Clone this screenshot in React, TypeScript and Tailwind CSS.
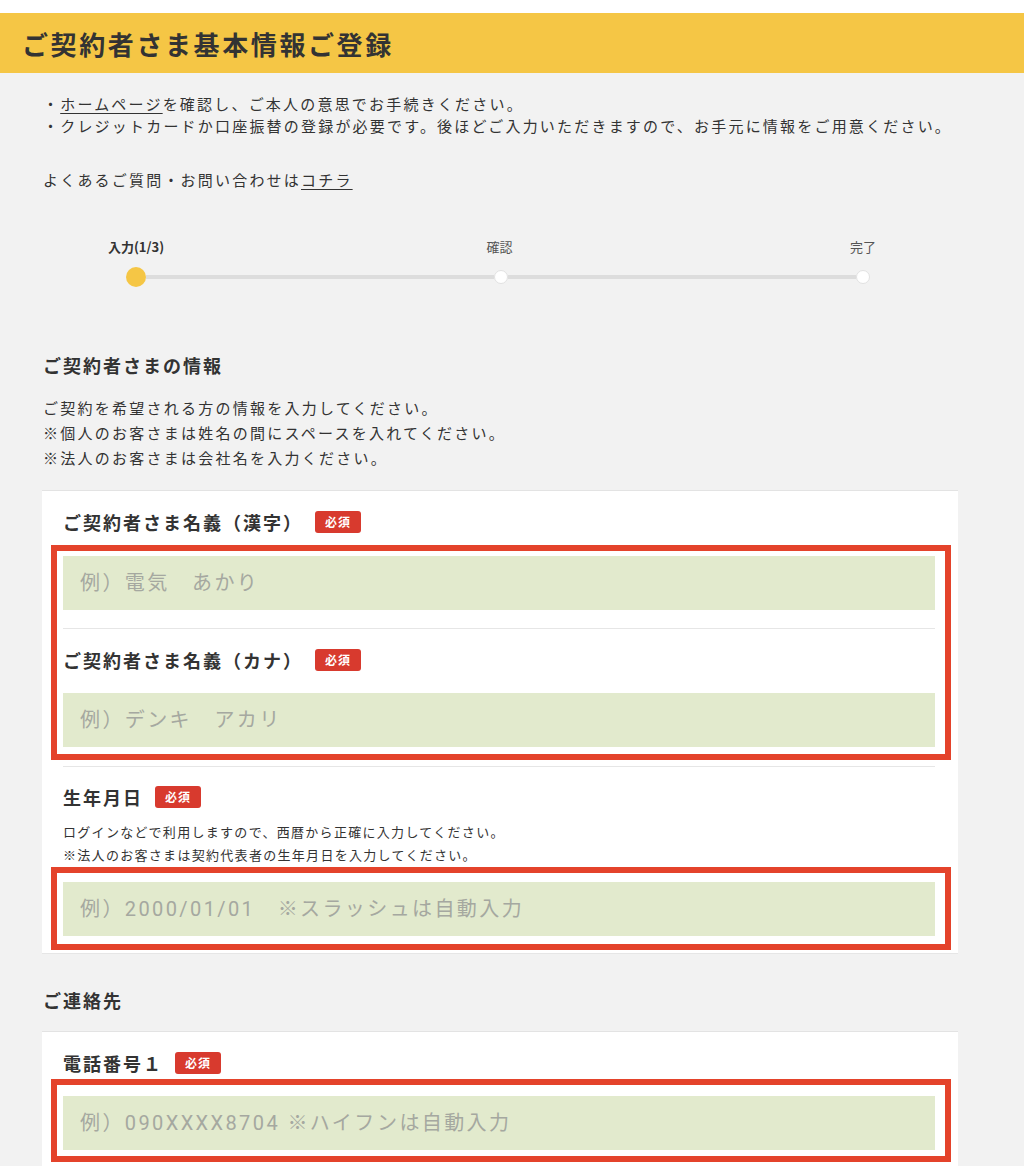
import type { ReactNode } from 'react';

function Badge() {
    return (
        <span className="ml-[12px] inline-flex h-[22px] w-[46px] items-center justify-center rounded-[3px] bg-[#d83a2e] text-[12px] font-bold tracking-[1px] text-white">
            必須
        </span>
    );
}

function Label({ children }: { children: ReactNode }) {
    return (
        <div className="flex items-center">
            <span className="text-[18px] font-bold leading-[24px] tracking-[2px] text-[#333]">{children}</span>
            <Badge />
        </div>
    );
}

function Field({ placeholder }: { placeholder: string }) {
    return (
        <input
            readOnly
            placeholder={placeholder}
            className="block h-[54px] w-full bg-[#e2eacd] pl-[17px] font-['Roboto','Noto_Sans_CJK_JP',sans-serif] text-[20px] tracking-[2.4px] text-[#333] outline-none placeholder:text-[#a5a8a0]"
        />
    );
}

// red annotation frame around the fields
function Mark({ className, children }: { className: string; children: ReactNode }) {
    return (
        <div className={`-ml-[12px] -mr-[16px] border-[6px] border-[#e4432b] pl-[6px] pr-[10px] ${className}`}>
            {children}
        </div>
    );
}

export default function App() {
    return (
        <div className="min-h-[1166px] bg-[#f2f2f2] font-['Noto_Sans_CJK_JP',sans-serif] text-[#333]">
            <div className="h-[13px] bg-white" />
            <header className="flex h-[60px] items-center bg-[#f5c645] px-[22px]">
                <h1 className="text-[26px] font-bold tracking-[2.6px] text-[#333]">ご契約者さま基本情報ご登録</h1>
            </header>

            <main className="px-[43px] pt-[20px]">
                <div className="text-[15px] leading-[22px] tracking-[2.2px]">
                    <p>
                        ・<span className="underline underline-offset-[3px]">ホームページ</span>を確認し、ご本人の意思でお手続きください。
                    </p>
                    <p>・クレジットカードか口座振替の登録が必要です。後ほどご入力いただきますので、お手元に情報をご用意ください。</p>
                    <p className="mt-[32px]">
                        よくあるご質問・お問い合わせは<span className="underline underline-offset-[3px]">コチラ</span>
                    </p>
                </div>

                {/* stepper */}
                <div className="mt-[47px] ml-[53px] flex w-[807px] justify-between text-[13px] leading-[18px]">
                    <span className="w-[80px] text-center font-bold">入力(1/3)</span>
                    <span className="w-[80px] text-center text-[#555]">確認</span>
                    <span className="w-[80px] text-center text-[#555]">完了</span>
                </div>
                <div className="mt-[11px] ml-[83px] flex h-[20px] w-[744px] items-center">
                    <span className="h-[20px] w-[20px] shrink-0 rounded-full bg-[#f5c645]" />
                    <span className="h-[4px] flex-1 bg-[#dddddd]" />
                    <span className="h-[14px] w-[14px] shrink-0 rounded-full border border-[#e2e2e2] bg-white" />
                    <span className="h-[4px] flex-1 bg-[#dddddd]" />
                    <span className="h-[14px] w-[14px] shrink-0 rounded-full border border-[#e2e2e2] bg-white" />
                </div>

                <h2 className="mt-[65px] text-[18px] font-bold leading-[26px] tracking-[2px]">ご契約者さまの情報</h2>
                <div className="mt-[17px] text-[15px] leading-[25px] tracking-[2.25px]">
                    <p>ご契約を希望される方の情報を入力してください。</p>
                    <p>※個人のお客さまは姓名の間にスペースを入れてください。</p>
                    <p>※法人のお客さまは会社名を入力ください。</p>
                </div>

                <section className="mt-[20px] -ml-px w-[916px] border-t border-[#e3e3e3] bg-white pr-[23px] pb-[3px] pl-[21px] pt-[19px] shadow-[0_1px_0_#e6e6e6]">
                    <Label>ご契約者さま名義（漢字）</Label>
                    <Mark className="mt-[11px] pt-[5px] pb-[7px]">
                        <Field placeholder="例）電気　あかり" />
                        <div className="mt-[18px] h-px bg-[#e6e6e6]" />
                        <div className="mt-[19px]">
                            <Label>ご契約者さま名義（カナ）</Label>
                        </div>
                        <div className="mt-[21px]">
                            <Field placeholder="例）デンキ　アカリ" />
                        </div>
                    </Mark>
                    <div className="mt-[6px] h-px bg-[#e6e6e6]" />

                    <div className="mt-[18px]">
                        <Label>生年月日</Label>
                    </div>
                    <div className="mt-[11px] text-[13px] leading-[23px] tracking-[1.3px]">
                        <p>ログインなどで利用しますので、西暦から正確に入力してください。</p>
                        <p>※法人のお客さまは契約代表者の生年月日を入力してください。</p>
                    </div>
                    <Mark className="mt-px pt-[9px] pb-[8px]">
                        <Field placeholder="例）2000/01/01　※スラッシュは自動入力" />
                    </Mark>
                </section>

                <h2 className="mt-[34px] text-[18px] font-bold leading-[26px] tracking-[2px]">ご連絡先</h2>

                <section className="mt-[18px] -ml-px w-[916px] border-t border-[#e3e3e3] bg-white pr-[23px] pb-[20px] pl-[21px] pt-[19px]">
                    <Label>電話番号１</Label>
                    <Mark className="mt-[4px] pt-[11px] pb-[6px]">
                        <Field placeholder="例）090XXXX8704 ※ハイフンは自動入力" />
                    </Mark>
                </section>
            </main>
        </div>
    );
}
